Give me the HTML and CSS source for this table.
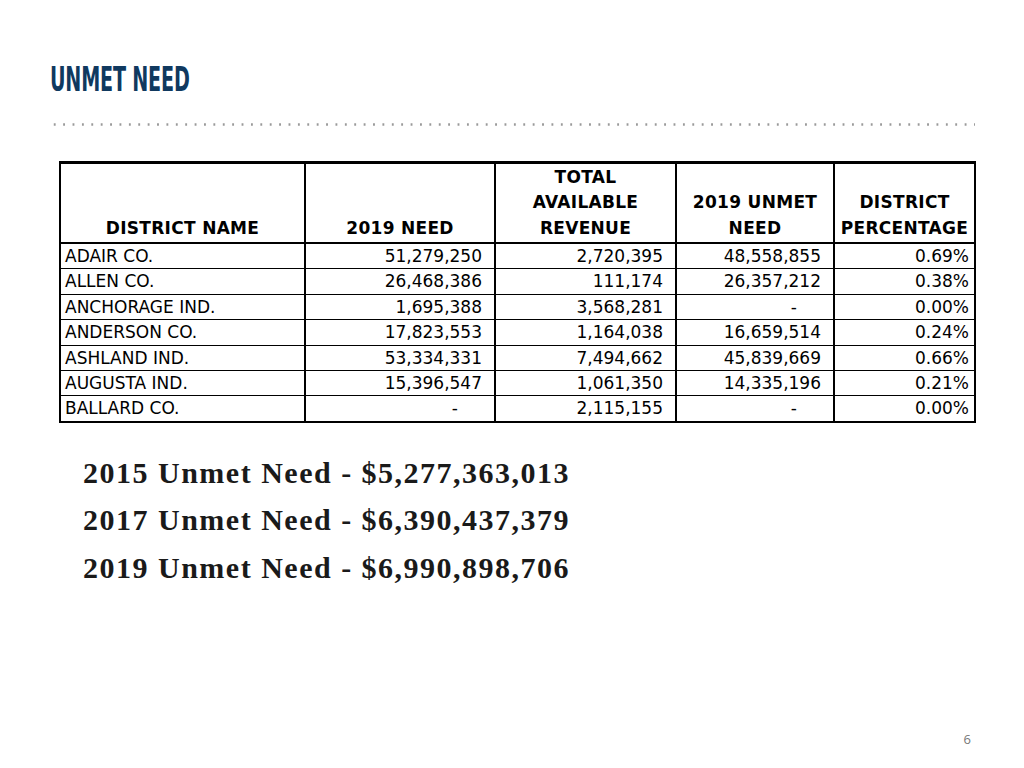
FILE: index.html
```html
<!DOCTYPE html>
<html>
<head>
<meta charset="utf-8">
<link rel="stylesheet" href="styles.css">
</head>
<body>
<div class="slide">
  <header class="head">
    <h1 class="title"><span>UNMET NEED</span></h1>
    <div class="dots"></div>
  </header>
  <table class="grid">
    <colgroup>
      <col class="c1"><col class="c2"><col class="c3"><col class="c4"><col class="c5">
    </colgroup>
    <thead>
      <tr>
        <th class="name">DISTRICT NAME</th>
        <th>2019 NEED</th>
        <th>TOTAL<br>AVAILABLE<br>REVENUE</th>
        <th>2019 UNMET<br>NEED</th>
        <th>DISTRICT<br>PERCENTAGE</th>
      </tr>
    </thead>
    <tbody>
      <tr><td>ADAIR CO.</td><td class="n">51,279,250</td><td class="n">2,720,395</td><td class="n">48,558,855</td><td class="p">0.69%</td></tr>
      <tr><td>ALLEN CO.</td><td class="n">26,468,386</td><td class="n">111,174</td><td class="n">26,357,212</td><td class="p">0.38%</td></tr>
      <tr><td>ANCHORAGE IND.</td><td class="n">1,695,388</td><td class="n">3,568,281</td><td class="n dash">-</td><td class="p">0.00%</td></tr>
      <tr><td>ANDERSON CO.</td><td class="n">17,823,553</td><td class="n">1,164,038</td><td class="n">16,659,514</td><td class="p">0.24%</td></tr>
      <tr><td>ASHLAND IND.</td><td class="n">53,334,331</td><td class="n">7,494,662</td><td class="n">45,839,669</td><td class="p">0.66%</td></tr>
      <tr><td>AUGUSTA IND.</td><td class="n">15,396,547</td><td class="n">1,061,350</td><td class="n">14,335,196</td><td class="p">0.21%</td></tr>
      <tr><td>BALLARD CO.</td><td class="n dash">-</td><td class="n">2,115,155</td><td class="n dash">-</td><td class="p">0.00%</td></tr>
    </tbody>
  </table>
  <ul class="totals">
    <li>2015 Unmet Need - $5,277,363,013</li>
    <li>2017 Unmet Need - $6,390,437,379</li>
    <li>2019 Unmet Need - $6,990,898,706</li>
  </ul>
  <footer class="foot">6</footer>
</div>
</body>
</html>
```

FILE: styles.css
```css
html, body {
  margin: 0;
  padding: 0;
  background: #ffffff;
}
.slide {
  width: 1024px;
  height: 768px;
  display: flex;
  flex-direction: column;
  box-sizing: border-box;
}
.head {
  padding: 62px 49px 0 50px;
}
.title {
  margin: 0;
  height: 36px;
  font-family: "Liberation Sans Narrow", "DejaVu Sans Condensed", "Liberation Sans", sans-serif;
  font-weight: bold;
  font-size: 33px;
  line-height: 36px;
  color: #10395f;
  white-space: nowrap;
}
.title span {
  display: inline-block;
  transform: scaleX(0.645);
  transform-origin: left center;
  letter-spacing: -0.3px;
}
.dots {
  margin-top: 25px;
  height: 3px;
  background-image: radial-gradient(circle, #9a9a9a 1px, transparent 1.4px);
  background-size: 9.4px 3px;
  background-repeat: repeat-x;
  background-position: 0 0;
}
.grid {
  margin: 35px 0 0 59px;
  width: 917px;
  border-collapse: collapse;
  table-layout: fixed;
  font-family: "DejaVu Sans", sans-serif;
  font-size: 17px;
  color: #000;
}
.c1 { width: 245px; }
.c2 { width: 190px; }
.c3 { width: 181px; }
.c4 { width: 158px; }
.c5 { width: 141px; }
.grid th {
  border: 2px solid #000;
  border-top-width: 3px;
  font-weight: bold;
  font-size: 17px;
  line-height: 25.5px;
  height: 77px;
  vertical-align: bottom;
  text-align: center;
  padding: 0 0 1px 0;
  letter-spacing: 0.3px;
}
.grid td {
  border-left: 2px solid #000;
  border-right: 2px solid #000;
  border-bottom: 1.5px solid #000;
  height: 24.4px;
  line-height: 24.4px;
  padding: 0 0 0 4px;
  white-space: nowrap;
}
.grid td.n {
  text-align: right;
  padding-right: 12px;
}
.grid td.n.dash {
  padding-right: 36px;
}
.grid td.p {
  text-align: right;
  padding-right: 5px;
}
.grid tbody tr:last-child td {
  border-bottom-width: 2px;
}
.totals {
  list-style: none;
  margin: 26px 0 0 83px;
  padding: 0;
  font-family: "Liberation Serif", serif;
  font-weight: bold;
  font-size: 30px;
  letter-spacing: 1.5px;
  color: #1a1a1a;
}
.totals li {
  height: 47.5px;
  line-height: 47.5px;
}
.foot {
  margin-top: auto;
  padding: 0 53px 20px 0;
  text-align: right;
  font-family: "Open Sans", sans-serif;
  font-size: 13px;
  color: #777;
}
```
